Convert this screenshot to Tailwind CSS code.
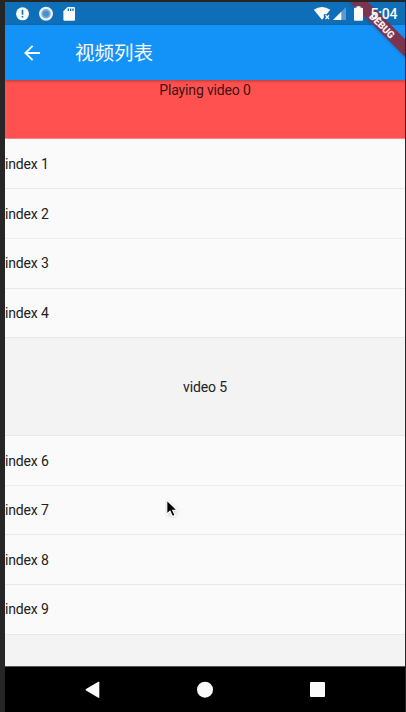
<!DOCTYPE html>
<html lang="zh">
<head>
<meta charset="utf-8">
<title>视频列表</title>
<script src="https://cdn.jsdelivr.net/npm/@tailwindcss/browser@4"></script>
</head>
<body class="h-[712px] w-[406px] overflow-hidden bg-[#262626] font-['Roboto','Noto_Sans_CJK_SC',sans-serif]">
<div class="relative ml-[5px] w-[400px] h-[712px] pt-[2px] flex flex-col overflow-hidden">
  <div class="h-[23px] shrink-0 bg-[#0f6eb8] flex items-center">
    <svg class="w-full h-[23px]" viewBox="5 2 400 23">
      <circle cx="22.5" cy="13.8" r="6.5" fill="#fafafa"/>
      <path d="M21.7 9.800h1.600v5h-1.600zM21.700 16h1.600v1.600h-1.600z" fill="#0f6eb8"/>
      <circle cx="46" cy="13.700" r="7" fill="#e8f0f6"/>
      <circle cx="46" cy="13.700" r="4.700" fill="#79abd6"/>
      <circle cx="46" cy="13.700" r="3" fill="#4b8fc8"/>
      <path d="M67.500 7h6.300q1.200 0 1.200 1.200v11.300q0 1.200-1.200 1.200h-9.200q-1.200 0-1.200-1.200v-8.300z" fill="#fafafa"/>
      <path d="M67.700 8.500h1.300v2.500h-1.300zM70 8.500h1.300v2.500h-1.300zM72.300 8.500h1.300v2.500h-1.300z" fill="#0f6eb8"/>
      <path d="M313.800 9.800Q322 4.200 330.300 9.800L326.500 14.300H323.800V17.800L322 19.800Z" fill="#fafafa"/>
      <path d="M325.500 15.300l3.500 3.700m0-3.700l-3.500 3.700" stroke="#fafafa" stroke-width="1.300"/>
      <path d="M346 7v13h-13z" fill="#5d9acb"/>
      <path d="M341.300 11.700v8.300H333z" fill="#fafafa"/>
    </svg>
  </div>
  <div class="h-[55px] shrink-0 bg-[#1392f7] flex items-center relative z-10 shadow-[0_1px_3px_rgba(0,0,0,0.3)]">
    <svg class="ml-[19px] w-4 h-4" viewBox="0 0 16 16" fill="none" stroke="#fafafa" stroke-width="1.800"><path d="M16 8H1.500M8.600 .8L1.400 8l7.200 7.200"/></svg>
    <h1 class="ml-[35px] pt-[2px] text-[19.500px] leading-none font-normal text-[#fafafa]">视频列表</h1>
  </div>
  <main class="h-[586px] shrink-0 overflow-hidden bg-[#fafafa] text-[14px] tracking-[-0.150px] text-[#212121]">
    <div class="h-[59px] bg-[#ff5250] border-b border-[#ff8584] text-center leading-[16px] pt-[2px] text-[#3d1414]">Playing video 0</div>
    <div class="h-[50px] pt-[2px] flex items-center border-b border-[#e8e8e8]">index 1</div>
    <div class="h-[49.500px] pt-[2px] flex items-center border-b border-[#eeeeee]">index 2</div>
    <div class="h-[50px] pt-[1px] flex items-center border-b border-[#e8e8e8]">index 3</div>
    <div class="h-[49px] pt-[2px] flex items-center border-b border-[#e8e8e8]">index 4</div>
    <div class="h-[98.500px] pt-[2px] flex items-center justify-center bg-[#f3f3f3] border-b border-[#e8e8e8]">video 5</div>
    <div class="h-[49.500px] pt-[2px] flex items-center border-b border-[#eeeeee]">index 6</div>
    <div class="h-[49.500px] pt-[2px] flex items-center border-b border-[#e8e8e8]">index 7</div>
    <div class="h-[49.500px] pt-[2px] flex items-center border-b border-[#e8e8e8]">index 8</div>
    <div class="h-[50px] pt-[1px] flex items-center border-b border-[#e8e8e8]">index 9</div>
    <div class="h-[49px] bg-[#f3f3f3]"></div>
  </main>
  <nav class="h-[46px] shrink-0 bg-black border-t border-[#555]">
    <svg class="w-full h-[45px]" viewBox="5 667 400 45" fill="#fafafa">
      <path d="M98.300 681.800q1-.5 1 .5v15q0 1-1 .5l-12.300-7.300q-1-.7 0-1.400z"/>
      <circle cx="205" cy="689.700" r="8"/>
      <rect x="310" y="682" width="15" height="15" rx="1"/>
    </svg>
  </nav>
  <svg class="absolute z-20 left-[335px] top-[2px] w-[65px] h-[65px] overflow-hidden" viewBox="340 2 65 65">
    <path d="M347 -1L407 59" stroke="#000" stroke-opacity=".06" stroke-width="5"/>
    <path d="M350 2H368L405 39V57Z" fill="#7a3450"/>
    <text transform="translate(382.200 25.600) rotate(45)" text-anchor="middle" y="3.700" font-size="10.200" font-weight="900" fill="#f6eef0" textLength="31" lengthAdjust="spacingAndGlyphs">DEBUG</text>
    <path d="M356.500 6.300h4v1.400h1.500q1 0 1 1v11q0 1-1 1h-7q-1 0-1-1v-11q0-1 1-1h1.500z" fill="#fafafa"/>
    <text x="370.500" y="19" font-size="14" font-weight="500" fill="#fafafa" textLength="27">5:04</text>
  </svg>
  <svg class="absolute z-20 left-[160px] top-[497px] w-[18px] h-[21px]" viewBox="165 499 18 21">
    <path d="M166.800 502v14.200l3.200-3 2.500 5.200 2.600-1.200-2.400-5h4.300z" fill="#000" stroke="#fff" stroke-width="1.100" class="drop-shadow-sm"/>
  </svg>
</div>
</body>
</html>
